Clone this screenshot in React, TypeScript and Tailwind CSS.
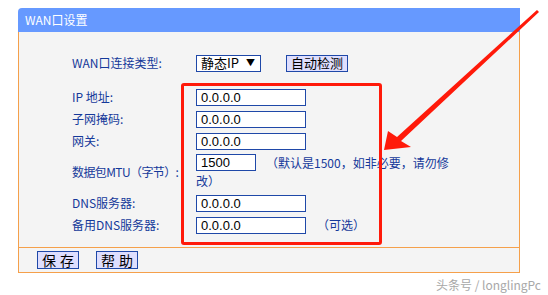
const cjk = { fontFamily: '"Noto Sans CJK SC", "Liberation Sans", sans-serif' };
const latin = { fontFamily: '"Liberation Sans", Arial, sans-serif' };

function Field({ value, w = 'w-[110px]' }: { value: string; w?: string }) {
  return (
    <div
      className={`${w} h-[17px] shrink-0 bg-white border border-[#1f48a8] pl-[4px] text-[13px] leading-[15px] text-black`}
      style={latin}
    >
      {value}
    </div>
  );
}

function Row({ label, children }: { label: string; children: React.ReactNode }) {
  return (
    <div className="flex items-center h-[22px]">
      <div className="w-[124px] shrink-0 whitespace-nowrap">{label}</div>
      <div className="flex items-center">{children}</div>
    </div>
  );
}

export default function App() {
  return (
    <div className="relative w-[548px] h-[295px] bg-white overflow-hidden" style={cjk}>
      <div className="ml-[18px] mt-[8px] w-[502px]">
        {/* Header */}
        <div className="h-[24px] bg-[#6699ff] rounded-tl-[4px] flex items-center pl-[7px] text-white text-[12px]">
          WAN口设置
        </div>

        {/* Body */}
        <div className="bg-[#f4f4f4] border-x border-[#f5a04b] pl-[53px] pt-[20px] pb-[11px] text-[12px] text-[#15399a]">
          <Row label="WAN口连接类型:">
            <div className="w-[65px] h-[17px] bg-white border border-[#1f48a8] flex items-center justify-between pl-[4px] pr-[5px] text-[13px] text-black">
              <span>静态IP</span>
              <span className="text-[9px]">▼</span>
            </div>
            <div className="ml-[25px] w-[62px] h-[17px] bg-[#dedefe] border border-[#1f48a8] flex items-center justify-center text-[13px] text-black">
              自动检测
            </div>
          </Row>

          <div className="mt-[12px]">
            <Row label="IP 地址:">
              <Field value="0.0.0.0" />
            </Row>
            <Row label="子网掩码:">
              <Field value="0.0.0.0" />
            </Row>
            <Row label="网关:">
              <Field value="0.0.0.0" />
            </Row>
            <div className="flex items-center h-[40px]">
              <div className="w-[124px] shrink-0 whitespace-nowrap tracking-[-0.6px]">数据包MTU（字节）:</div>
              <div className="self-start pt-[2px]">
                <div className="flex items-center h-[17px]">
                  <Field value="1500" w="w-[60px]" />
                  <span className="ml-[10px] whitespace-nowrap">（默认是1500，如非必要，请勿修</span>
                </div>
                <div className="h-[19px] leading-[19px]">改）</div>
              </div>
            </div>
            <Row label="DNS服务器:">
              <Field value="0.0.0.0" />
            </Row>
            <Row label="备用DNS服务器:">
              <Field value="0.0.0.0" />
              <span className="ml-[11px]">（可选）</span>
            </Row>
          </div>
        </div>

        {/* Footer */}
        <div className="h-[26px] bg-[#f4f4f4] border border-[#f5a04b] flex items-center pl-[18px] gap-[17px]">
          <div className="w-[42px] h-[18px] bg-[#dedefe] border border-[#1f48a8] flex items-center justify-center text-[14px] tracking-[4px] pl-[4px] text-black">
            保存
          </div>
          <div className="w-[42px] h-[18px] bg-[#dedefe] border border-[#1f48a8] flex items-center justify-center text-[14px] tracking-[4px] pl-[4px] text-black">
            帮助
          </div>
        </div>
      </div>

      <div className="flex justify-end pr-[7px] pt-[3px] text-[12px] text-[#a8a8a8]">
        头条号 / longlingPc
      </div>

      {/* Annotation: red box */}
      <div className="absolute left-[181px] top-[83px] w-[201px] h-[162px] border-[3px] border-[#ff1a0a] rounded-[3px]" />

      {/* Annotation: arrow */}
      <svg className="absolute inset-0" width="548" height="295" viewBox="0 0 548 295">
        <polygon
          points="384,150 388,131 397,137 537,10 539,12 401,141 411,147"
          fill="#ff1a0a"
        />
      </svg>
    </div>
  );
}
